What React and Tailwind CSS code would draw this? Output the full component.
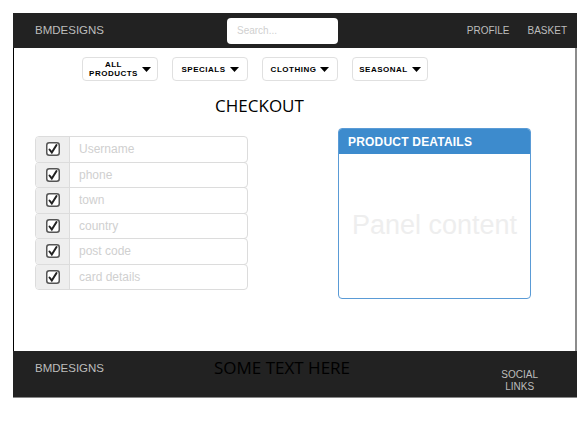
import React from "react";

const Caret = () => (
  <svg width="9" height="5" viewBox="0 0 9 5" className="shrink-0">
    <polygon points="0,0 9,0 4.5,5" fill="#000" />
  </svg>
);

const Check = () => (
  <svg width="14" height="14" viewBox="0 0 14 14">
    <rect x="0.75" y="0.75" width="12.5" height="12.5" rx="2.5" fill="#fff" stroke="#555" strokeWidth="1.5" />
    <path d="M3.5 7.5 L5.8 10.5 L10.5 3" fill="none" stroke="#222" strokeWidth="2" strokeLinecap="round" />
  </svg>
);

const fields = ["Username", "phone", "town", "country", "post code", "card details"];
const menus = [["ALL", "PRODUCTS"], ["SPECIALS"], ["CLOTHING"], ["SEASONAL"]];

export default function App() {
  return (
    <div className="w-[586px] h-[423px] bg-white pt-[13px] pl-[13px]" style={{ fontFamily: '"Liberation Sans", Arial, sans-serif' }}>
      <div className="w-[564px] flex flex-col">
        <header className="h-[35px] bg-[#222222] flex items-center">
          <div className="w-[214px] pl-[22px] text-[11.5px] text-[#bdbdbd]">BMDESIGNS</div>
          <input
            placeholder="Search..."
            className="w-[111px] h-[26px] rounded-[4px] bg-white px-[10px] text-[10px] placeholder:text-[#d0d0d0] outline-none"
          />
          <div className="ml-auto flex gap-[18px] pr-[10px] text-[10px] text-[#bdbdbd]">
            <span>PROFILE</span>
            <span>BASKET</span>
          </div>
        </header>
        <main className="h-[303px] border-l border-l-black border-r-2 border-r-[#8c8c8c] flex flex-col">
          <div className="flex gap-[14px] pl-[68px] pt-[9px]">
            {menus.map((m, i) => (
              <div key={i} className="w-[76px] h-[24px] border border-[#e0e0e0] rounded-[4px] flex items-center justify-center gap-[4px]">
                <div className="text-[8px] font-bold leading-[9px] text-center tracking-[0.5px]">
                  {m.map((t) => <div key={t}>{t}</div>)}
                </div>
                <Caret />
              </div>
            ))}
          </div>
          <div className="h-[48px] flex items-center justify-center pr-[70px] pt-[2px] text-[17px] text-black" style={{ fontFamily: '"Open Sans", sans-serif' }}>
            CHECKOUT
          </div>
          <div className="flex pl-[21px] pt-[6px]">
            <div className="w-[213px] pt-[1px] flex flex-col">
              {fields.map((f) => (
                <div key={f} className="flex h-[26.5px] border border-[#dcdcdc] rounded-[4px] -mt-px first:mt-0 overflow-hidden">
                  <div className="w-[34px] bg-[#eeeeee] border-r border-[#dcdcdc] flex items-center justify-center">
                    <Check />
                  </div>
                  <div className="flex-1 flex items-center pl-[9px] text-[12px] text-[#d0d0d0]">{f}</div>
                </div>
              ))}
            </div>
            <div className="ml-[90px] -mt-[7px] w-[193px] h-[171px] border border-[#5a9bd6] rounded-[4px] overflow-hidden flex flex-col">
              <div className="h-[25px] bg-[#3d8bcd] flex items-center pl-[9px] text-[12px] font-bold text-white tracking-[0.2px]">
                PRODUCT DEATAILS
              </div>
              <div className="flex-1 flex items-center justify-center text-[27px] text-[#eeeeee] pb-[1px]">
                Panel content
              </div>
            </div>
          </div>
        </main>
        <footer className="h-[47px] bg-[#222222] border-b border-[#888888] flex">
          <div className="w-[201px] pl-[22px] pt-[9px] text-[11.5px] text-[#bdbdbd]">BMDESIGNS</div>
          <div className="pt-[4px] text-[17px] text-black" style={{ fontFamily: '"Open Sans", sans-serif' }}>SOME TEXT HERE</div>
          <div className="ml-auto mr-[39px] pt-[18px] text-[10px] leading-[12px] text-center text-[#bdbdbd]">
            <div>SOCIAL</div>
            <div>LINKS</div>
          </div>
        </footer>
      </div>
    </div>
  );
}
